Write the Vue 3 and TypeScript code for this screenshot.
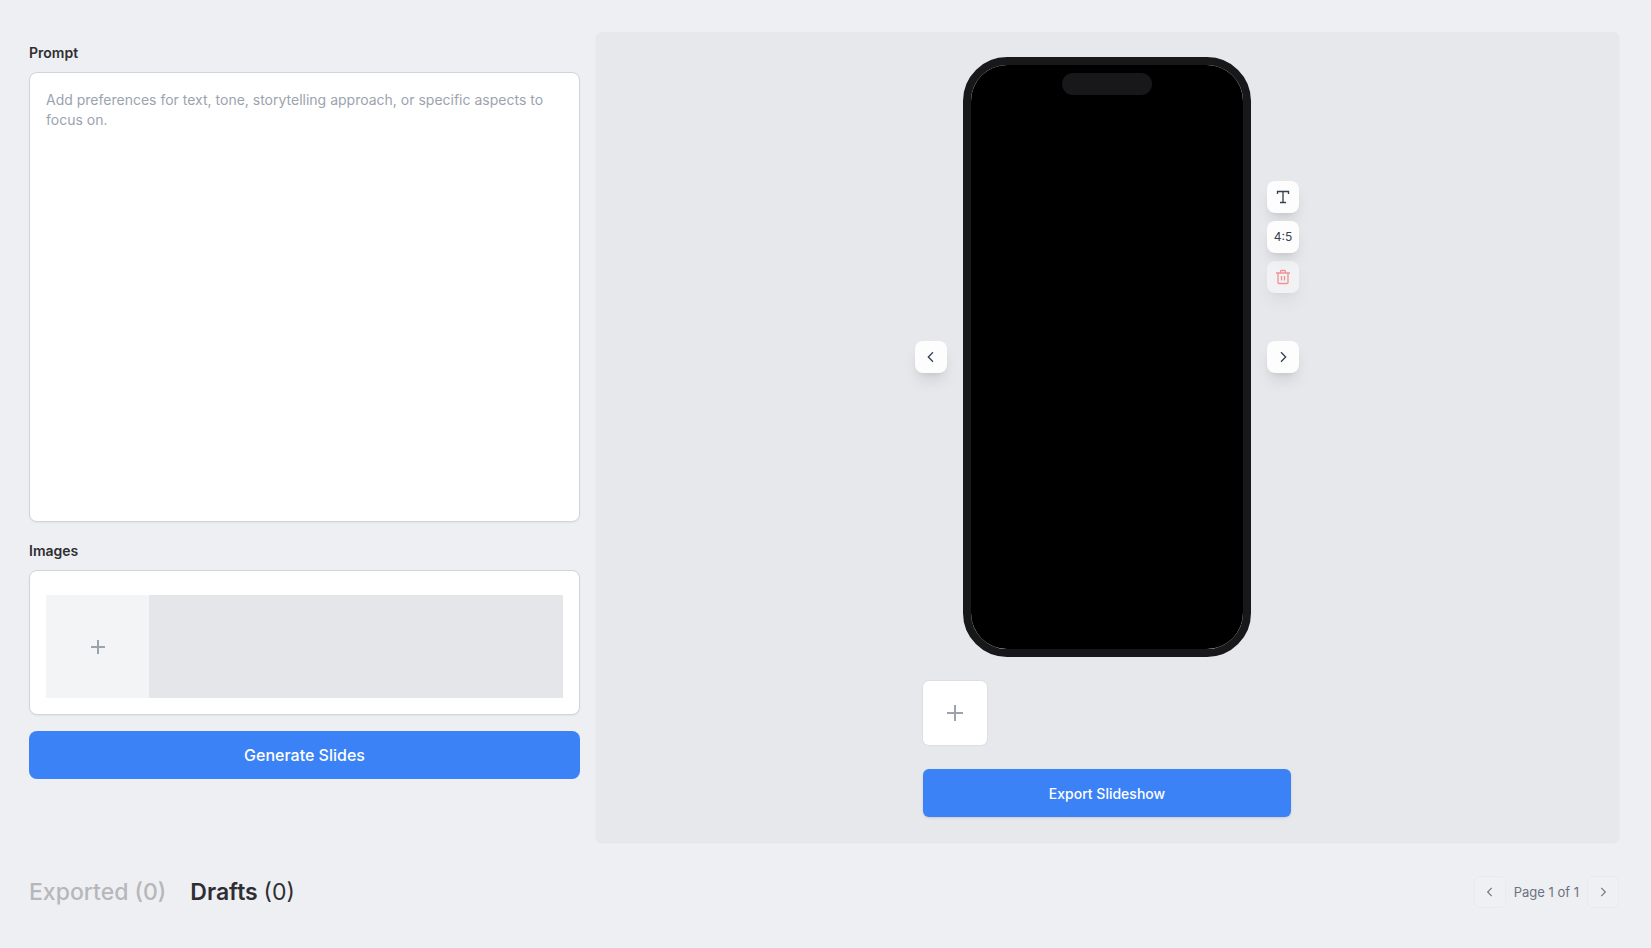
<script setup lang="ts">
import { ref } from 'vue'

type Tab = 'exported' | 'drafts'

const prompt = ref('')
const activeTab = ref<Tab>('drafts')
const tabs: { id: Tab; label: string; count: number }[] = [
  { id: 'exported', label: 'Exported', count: 0 },
  { id: 'drafts', label: 'Drafts', count: 0 },
]
const slides = ref<string[]>([])
const page = ref(1)
const pageCount = ref(1)
</script>

<template>
  <main class="page">
    <div class="workspace">
      <form class="composer" @submit.prevent>
        <label class="label" for="prompt">Prompt</label>
        <textarea
          id="prompt"
          v-model="prompt"
          class="card prompt"
          placeholder="Add preferences for text, tone, storytelling approach, or specific aspects to focus on."
        ></textarea>

        <h2 id="images-label" class="label images-label">Images</h2>
        <div class="card images" role="group" aria-labelledby="images-label">
          <div class="image-strip">
            <button type="button" class="add-image" aria-label="Add image">
              <svg class="plus" viewBox="0 0 20 20" width="20" height="20"><path d="M10 3v14M3 10h14" /></svg>
            </button>
          </div>
        </div>

        <button type="submit" class="primary generate">Generate Slides</button>
      </form>

      <section class="preview" aria-label="Slide preview">
        <div class="stage">
          <button type="button" class="tool" aria-label="Previous slide">
            <svg class="chevron" viewBox="0 0 24 24" width="16" height="16"><path d="M15 19l-7-7 7-7" /></svg>
          </button>

          <div class="phone">
            <div class="screen">
              <div class="notch"></div>
            </div>
          </div>

          <div class="side">
            <div class="tools">
              <button type="button" class="tool" aria-label="Add text">
                <svg class="type" viewBox="0 0 16 16" width="16" height="16">
                  <path d="M2.500 5V2.500h11V5M8 2.500v11M5 13.500h6" />
                </svg>
              </button>
              <button type="button" class="tool ratio">4:5</button>
              <button type="button" class="tool remove" aria-label="Delete slide" disabled>
                <svg class="trash" viewBox="0 0 16 16" width="16" height="16">
                  <path d="M1 4h14M3 4v9.500q0 1 1 1h8q1 0 1-1V4M5.500 4V2.500q0-1 1-1h3q1 0 1 1V4M6.500 7v4.500M9.500 7v4.500" />
                </svg>
              </button>
            </div>
            <button type="button" class="tool next" aria-label="Next slide">
              <svg class="chevron" viewBox="0 0 24 24" width="16" height="16"><path d="M9 5l7 7-7 7" /></svg>
            </button>
          </div>
        </div>

        <div class="actions">
          <div class="slides">
            <div v-for="slide in slides" :key="slide" class="tile"></div>
            <button type="button" class="tile" aria-label="Add slide">
              <svg class="plus" viewBox="0 0 24 24" width="24" height="24"><path d="M12 4v16m8-8H4" /></svg>
            </button>
          </div>
          <button type="button" class="primary export">Export Slideshow</button>
        </div>
      </section>
    </div>

    <footer class="library">
      <div class="tabs" role="tablist">
        <button
          v-for="tab in tabs"
          :key="tab.id"
          type="button"
          role="tab"
          class="tab"
          :class="{ active: activeTab === tab.id }"
          :aria-selected="activeTab === tab.id"
          @click="activeTab = tab.id"
        >{{ tab.label }} <span class="count">({{ tab.count }})</span></button>
      </div>
      <nav class="pager" aria-label="Pagination">
        <button type="button" class="page-button" aria-label="Previous page" :disabled="page <= 1">
          <svg class="chevron" viewBox="0 0 24 24" width="14" height="14"><path d="M15 19l-7-7 7-7" /></svg>
        </button>
        <span class="page-text">Page {{ page }} of {{ pageCount }}</span>
        <button type="button" class="page-button" aria-label="Next page" :disabled="page >= pageCount">
          <svg class="chevron" viewBox="0 0 24 24" width="14" height="14"><path d="M9 5l7 7-7 7" /></svg>
        </button>
      </nav>
    </footer>
  </main>
</template>

<style>
body {
  background: #eeeff3;
}
</style>

<style scoped>
.page {
  box-sizing: border-box;
  padding: 32px 32px 32px 29px;
  font-family: Inter, "Liberation Sans", sans-serif;
  color: #2e2e32;
}

.page * {
  box-sizing: border-box;
}

button {
  display: flex;
  align-items: center;
  justify-content: center;
  margin: 0;
  padding: 0;
  border: 0;
  font: inherit;
  cursor: pointer;
}

svg {
  display: block;
  fill: none;
  stroke: currentColor;
  stroke-width: 2;
}

.workspace {
  display: grid;
  grid-template-columns: minmax(0, 551fr) minmax(0, 1023fr);
  gap: 16px;
}

.composer {
  display: flex;
  flex-direction: column;
  padding-top: 11px;
}

.label {
  margin: 0 0 9px;
  font-size: 14px;
  font-weight: 600;
  line-height: 20px;
}

.images-label {
  margin-top: 19px;
}

.card {
  border: 1px solid #d1d5db;
  border-radius: 8px;
  background: #fff;
  box-shadow: 0 1px 2px rgb(0 0 0 / 5%);
}

.prompt {
  display: block;
  width: 100%;
  height: 450px;
  padding: 17px 16px;
  font: 400 14px/20px Inter, "Liberation Sans", sans-serif;
  color: #2e2e32;
  resize: none;
  outline: none;
}

.prompt::placeholder {
  color: #9ca3af;
  opacity: 1;
}

.images {
  padding: 24px 16px 16px;
}

.image-strip {
  display: flex;
  background: #e5e6ea;
}

.add-image {
  width: 103px;
  height: 103px;
  background: #f3f4f6;
}

.plus {
  color: #9ca3af;
}

.primary {
  width: 100%;
  height: 48px;
  background: #3b82f6;
  color: #fff;
  font-weight: 500;
}

.generate {
  margin-top: 16px;
  border-radius: 8px;
  font-size: 16px;
}

.preview {
  display: flex;
  flex-direction: column;
  align-items: center;
  gap: 24px;
  padding: 25px 17px 25px 16px;
  border-radius: 6px;
  background: #e7e8ec;
  box-shadow: 0 1px 2px rgb(0 0 0 / 5%);
}

.stage {
  display: flex;
  align-items: center;
  gap: 16px;
}

.phone {
  width: 288px;
  height: 600px;
  border: 8px solid #18181a;
  border-radius: 44px;
  background: #fff padding-box;
}

.screen {
  height: 100%;
  padding-top: 8px;
  border-radius: 36px;
  background: #000;
}

.notch {
  width: 90px;
  height: 22px;
  margin: 0 auto;
  border-radius: 11px;
  background: #18181a;
}

.side {
  position: relative;
}

.tools {
  position: absolute;
  bottom: 80px;
  display: flex;
  flex-direction: column;
  gap: 8px;
}

.tool {
  width: 32px;
  height: 32px;
  border-radius: 8px;
  background: #fdfdfe;
  color: #374151;
  box-shadow: 0 10px 15px -3px rgb(0 0 0 / 10%), 0 4px 6px -4px rgb(0 0 0 / 10%);
}

.ratio {
  font-size: 12px;
  line-height: 16px;
}

.remove {
  color: #ef4444;
  opacity: 0.5;
}

.type,
.trash {
  stroke-width: 1.35;
}

.actions {
  display: flex;
  flex-direction: column;
  gap: 24px;
  width: 368px;
}

.slides {
  display: flex;
  gap: 8px;
}

.tile {
  width: 64px;
  height: 64px;
  border-radius: 6px;
  background: #fff;
  box-shadow: 0 0 0 1px #dddfe3;
}

.export {
  border-radius: 6px;
  font-size: 14px;
  box-shadow: 0 1px 3px rgb(0 0 0 / 10%), 0 1px 2px -1px rgb(0 0 0 / 10%);
}

.library {
  display: flex;
  align-items: center;
  justify-content: space-between;
  padding-top: 34px;
}

.tabs {
  display: flex;
  gap: 24px;
}

.tab {
  display: block;
  background: none;
  color: #b7b7b9;
  font-size: 23px;
  font-weight: 500;
  line-height: 32px;
}

.tab.active {
  color: #2e2e32;
  font-weight: 600;
}

.tab.active .count {
  font-weight: 400;
}

.pager {
  display: flex;
  align-items: center;
  gap: 8px;
}

.page-button {
  width: 32px;
  height: 32px;
  border: 1px solid #e9eaee;
  border-radius: 6px;
  background: #eff0f4;
  color: #77787c;
}

.page-text {
  color: #6b7280;
  font-size: 13px;
  line-height: 20px;
}
</style>
